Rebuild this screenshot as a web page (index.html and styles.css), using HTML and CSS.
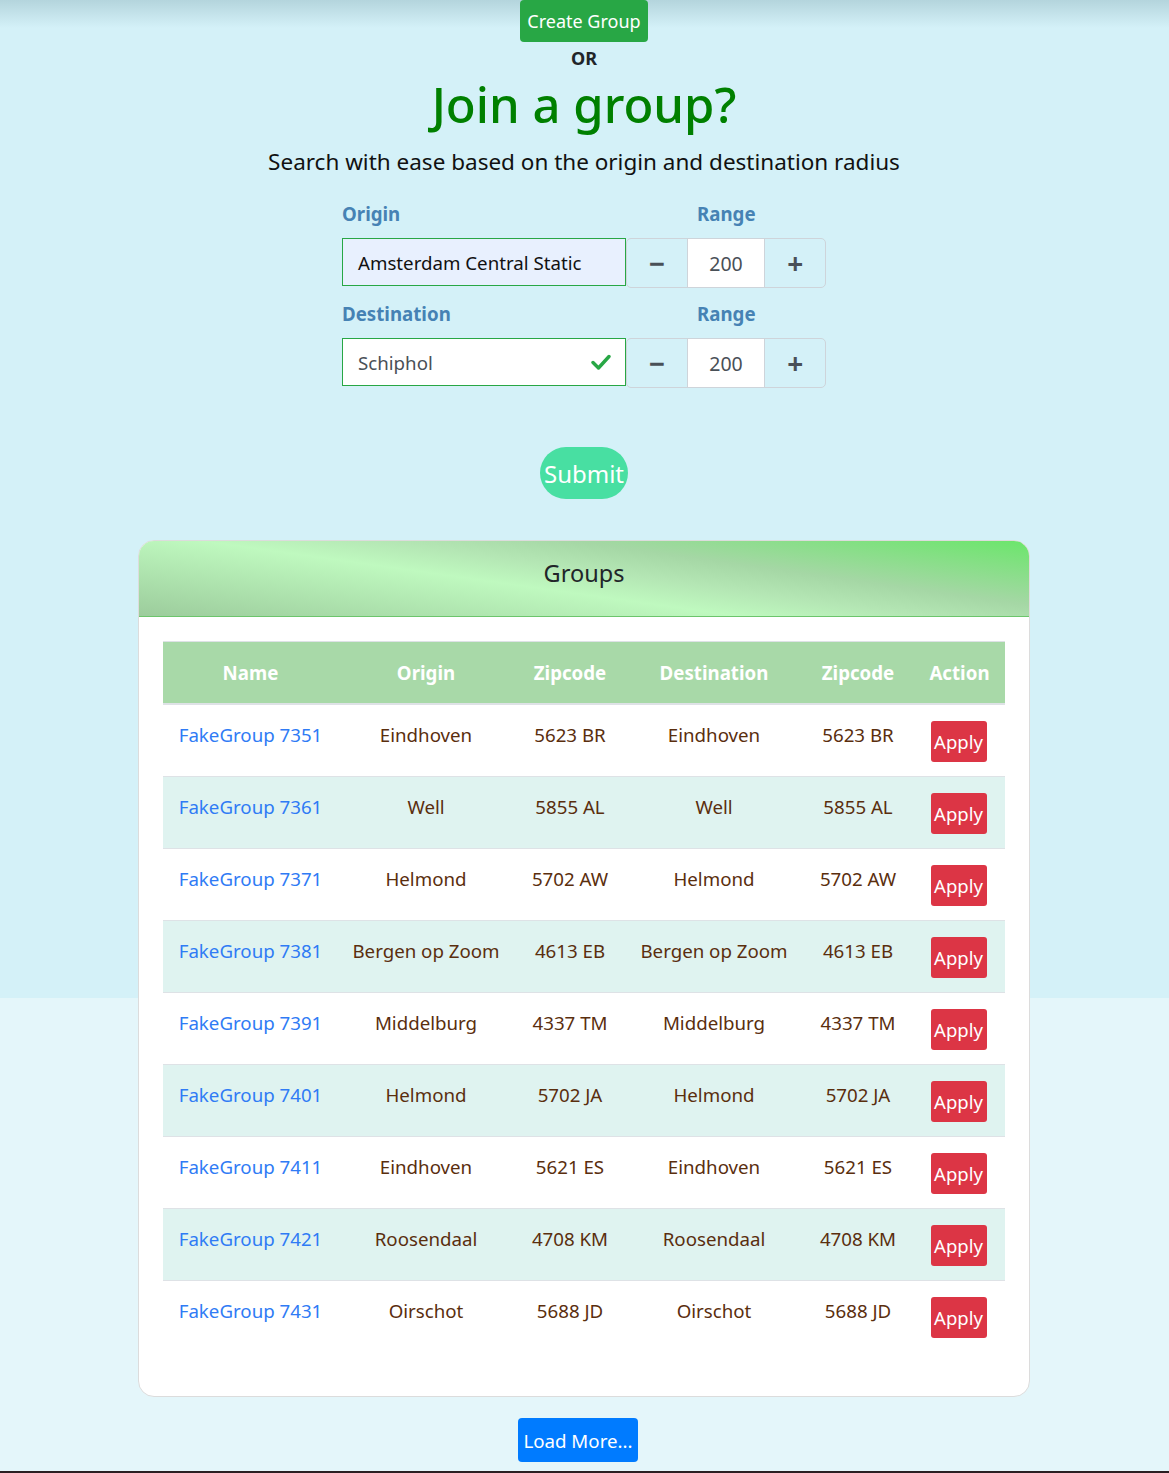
FILE: index.html
```html
<!DOCTYPE html>
<html lang="en">
<head>
<meta charset="utf-8">
<title>Join a group</title>
<link rel="stylesheet" href="styles.css">
</head>
<body>
<main class="page">
  <div class="top">
    <button class="btn btn-create">Create Group</button>
    <div class="or">OR</div>
    <h1 class="title">Join a group?</h1>
    <p class="subtitle">Search with ease based on the origin and destination radius</p>
  </div>

  <form class="search">
    <div class="row-labels">
      <label class="lbl">Origin</label>
      <label class="lbl lbl-range">Range</label>
    </div>
    <div class="row-fields">
      <div class="place place-filled">Amsterdam Central Static</div>
      <div class="stepper">
        <span class="step">&minus;</span>
        <span class="step-val">200</span>
        <span class="step step-last">+</span>
      </div>
    </div>
    <div class="row-labels row-labels-2">
      <label class="lbl">Destination</label>
      <label class="lbl lbl-range">Range</label>
    </div>
    <div class="row-fields">
      <div class="place"><span>Schiphol</span>
        <svg class="check" viewBox="0 0 20 16" width="20" height="16"><path d="M2 8.5 L7.5 14 L18 2.5" fill="none" stroke="#28a745" stroke-width="3.4" stroke-linecap="round" stroke-linejoin="round"/></svg>
      </div>
      <div class="stepper">
        <span class="step">&minus;</span>
        <span class="step-val">200</span>
        <span class="step step-last">+</span>
      </div>
    </div>
    <div class="submit-wrap"><button type="button" class="btn-submit">Submit</button></div>
  </form>

  <section class="card">
    <div class="card-head">Groups</div>
    <div class="card-body">
      <table class="groups">
        <thead>
          <tr><th class="c-name">Name</th><th class="c-city">Origin</th><th class="c-zip">Zipcode</th><th class="c-city">Destination</th><th class="c-zip">Zipcode</th><th class="c-act">Action</th></tr>
        </thead>
        <tbody>
          <tr><td><a href="#">FakeGroup 7351</a></td><td>Eindhoven</td><td>5623 BR</td><td>Eindhoven</td><td>5623 BR</td><td><button class="btn-apply">Apply</button></td></tr>
          <tr><td><a href="#">FakeGroup 7361</a></td><td>Well</td><td>5855 AL</td><td>Well</td><td>5855 AL</td><td><button class="btn-apply">Apply</button></td></tr>
          <tr><td><a href="#">FakeGroup 7371</a></td><td>Helmond</td><td>5702 AW</td><td>Helmond</td><td>5702 AW</td><td><button class="btn-apply">Apply</button></td></tr>
          <tr><td><a href="#">FakeGroup 7381</a></td><td>Bergen op Zoom</td><td>4613 EB</td><td>Bergen op Zoom</td><td>4613 EB</td><td><button class="btn-apply">Apply</button></td></tr>
          <tr><td><a href="#">FakeGroup 7391</a></td><td>Middelburg</td><td>4337 TM</td><td>Middelburg</td><td>4337 TM</td><td><button class="btn-apply">Apply</button></td></tr>
          <tr><td><a href="#">FakeGroup 7401</a></td><td>Helmond</td><td>5702 JA</td><td>Helmond</td><td>5702 JA</td><td><button class="btn-apply">Apply</button></td></tr>
          <tr><td><a href="#">FakeGroup 7411</a></td><td>Eindhoven</td><td>5621 ES</td><td>Eindhoven</td><td>5621 ES</td><td><button class="btn-apply">Apply</button></td></tr>
          <tr><td><a href="#">FakeGroup 7421</a></td><td>Roosendaal</td><td>4708 KM</td><td>Roosendaal</td><td>4708 KM</td><td><button class="btn-apply">Apply</button></td></tr>
          <tr><td><a href="#">FakeGroup 7431</a></td><td>Oirschot</td><td>5688 JD</td><td>Oirschot</td><td>5688 JD</td><td><button class="btn-apply">Apply</button></td></tr>
        </tbody>
      </table>
    </div>
  </section>

  <div class="more-wrap"><button class="btn-more">Load More...</button></div>
</main>
<footer class="footer"></footer>
</body>
</html>
```

FILE: styles.css
```css
* { box-sizing: border-box; }

html, body {
  margin: 0;
  padding: 0;
}

body {
  font-family: "Noto Sans", "Open Sans", sans-serif;
  color: #212529;
  background:
    linear-gradient(to bottom, rgba(120, 160, 170, 0.35), rgba(120, 160, 170, 0) 28px),
    linear-gradient(to bottom, #d4f1f8 0, #d4f1f8 998px, #e4f6fa 998px, #e4f6fa 100%);
  min-height: 1473px;
}

.page {
  display: flex;
  flex-direction: column;
  align-items: center;
  padding-right: 1px;
}

.top {
  display: flex;
  flex-direction: column;
  align-items: center;
}

.btn-create {
  height: 42px;
  width: 128px;
  padding: 0;
  border: none;
  border-radius: 4px;
  background: #28a745;
  color: #fff;
  font-family: inherit;
  font-size: 18px;
  line-height: 42px;
}

.or {
  font-weight: 700;
  font-size: 18px;
  line-height: 32px;
  color: #212529;
}

.title {
  margin: 0;
  font-size: 49px;
  line-height: 60px;
  font-weight: 500;
  color: #008000;
}

.subtitle {
  margin: 13px 0 0;
  font-size: 22.5px;
  line-height: 30px;
  color: #111;
}

.search {
  width: 484px;
  margin-top: 21px;
  display: flex;
  flex-direction: column;
}

.row-labels {
  display: flex;
  height: 30px;
  align-items: center;
}

.row-labels-2 { margin-top: 12px; }

.lbl {
  font-weight: 700;
  font-size: 18.7px;
  color: #4682b4;
  width: 355px;
}

.lbl-range { width: auto; }

.row-fields {
  display: flex;
  margin-top: 10px;
  height: 48px;
}

.place {
  width: 284px;
  height: 48px;
  border: 1px solid #28a745;
  background: #fff;
  padding: 0 14px 0 15px;
  display: flex;
  align-items: center;
  justify-content: space-between;
  font-size: 18.7px;
  color: #495057;
}

.place-filled {
  background: #e8f0fe;
  color: #111;
}

.check { display: block; }

.stepper {
  display: flex;
  width: 200px;
  height: 50px;
  border: 1px solid #ced4da;
  border-radius: 5px;
  overflow: hidden;
}

.step {
  width: 60px;
  display: flex;
  align-items: center;
  justify-content: center;
  font-size: 28px;
  font-weight: 700;
  color: #495057;
}

.step-val {
  width: 79px;
  background: #fff;
  border-left: 1px solid #ced4da;
  border-right: 1px solid #ced4da;
  display: flex;
  align-items: center;
  justify-content: center;
  font-size: 19.5px;
  color: #495057;
}

.submit-wrap {
  display: flex;
  justify-content: center;
  margin-top: 61px;
}

.btn-submit {
  width: 88px;
  height: 52px;
  border: none;
  border-radius: 26px;
  background: #48dfa2;
  color: #fff;
  font-family: inherit;
  font-size: 24px;
  padding: 0;
}

.card {
  margin-top: 41px;
  width: 892px;
  background: #fff;
  border: 1px solid #dcdcdc;
  border-radius: 16px;
  overflow: hidden;
}

.card-head {
  height: 76px;
  border-bottom: 1px solid #6cc56c;
  background: linear-gradient(8deg, #9ccc9c 0%, #bff9bf 42%, #b4e6b4 55%, #a5d7a5 68%, #6be66b 100%);
  display: flex;
  align-items: center;
  justify-content: center;
  font-size: 23.5px;
  color: #212529;
  padding-bottom: 12px;
}

.card-body {
  padding: 24px 24px 44px;
}

.groups {
  width: 842px;
  border-collapse: collapse;
  table-layout: fixed;
}

.c-name { width: 175px; }
.c-city { width: 176px; }
.c-zip { width: 112px; }
.c-act { width: 91px; }

.groups thead th {
  background: #a8d9a8;
  color: #fff;
  font-size: 18.7px;
  font-weight: 700;
  height: 62px;
  border-top: 1px solid #dee2e6;
  border-bottom: 2px solid #dee2e6;
  padding: 0 2px;
  text-align: center;
  white-space: nowrap;
}

.groups tbody td {
  height: 72px;
  padding: 16px 2px 14px;
  vertical-align: top;
  text-align: center;
  font-size: 18.7px;
  line-height: 28px;
  color: #5a2e0e;
  border-top: 1px solid #dee2e6;
  white-space: nowrap;
}

.groups tbody tr:first-child td { border-top: none; }

.groups tbody tr:nth-child(even) td { background: #dff3f0; }

.groups a {
  color: #2f7bf5;
  text-decoration: none;
}

.btn-apply {
  width: 56px;
  height: 41px;
  border: none;
  border-radius: 3px;
  background: #dc3545;
  color: #fff;
  font-family: inherit;
  font-size: 18.5px;
  padding: 0;
  margin-left: -2px;
}

.more-wrap {
  margin-top: 21px;
  margin-right: 12px;
}

.btn-more {
  width: 120px;
  height: 44px;
  border: none;
  border-radius: 4px;
  background: #007bff;
  color: #fff;
  font-family: inherit;
  font-size: 18.7px;
  padding: 0;
}

.footer {
  margin-top: 9px;
  height: 3px;
  background: #2a1f22;
}
```
